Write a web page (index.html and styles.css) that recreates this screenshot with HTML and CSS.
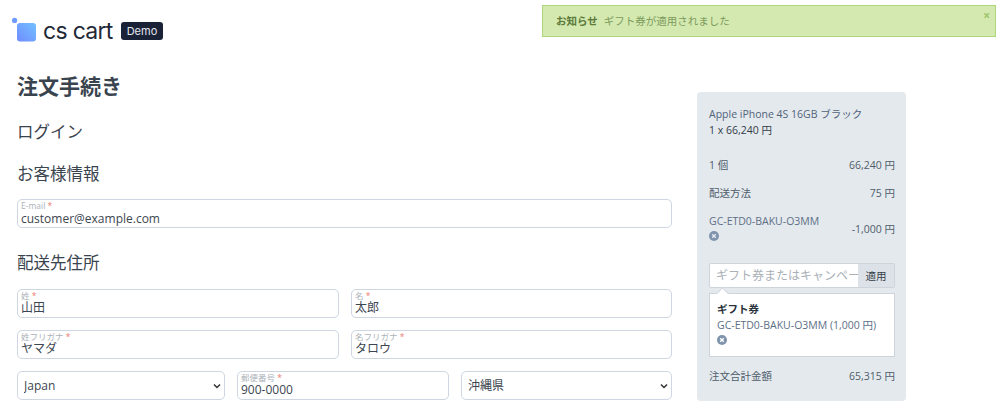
FILE: index.html
```html
<!doctype html>
<html>

<head>
	<meta charset="utf-8">
	<title>注文手続き</title>
	<link rel="stylesheet" href="styles.css">
</head>

<body>
	<div class="notice">
		<b>お知らせ</b><span>ギフト券が適用されました</span>
		<i class="notice-close">×</i>
	</div>

	<header class="logo">
		<svg class="logo-mark" width="26" height="26" viewBox="0 0 26 26">
			<defs>
				<linearGradient id="lg" x1="0" y1="1" x2="1" y2="0">
					<stop offset="0" stop-color="#6f8cff" />
					<stop offset="1" stop-color="#74c0ff" />
				</linearGradient>
			</defs>
			<rect x="5" y="6" width="19" height="18.5" rx="3" fill="url(#lg)" />
			<circle cx="2.6" cy="3.4" r="2.6" fill="#6f9bff" />
		</svg>
		<span class="logo-text">cs cart</span>
		<span class="logo-badge">Demo</span>
	</header>

	<div class="page">
		<main class="main">
			<h1>注文手続き</h1>
			<h2 class="h-login">ログイン</h2>
			<h2 class="h-customer">お客様情報</h2>
			<label class="field field-email">
				<span class="field-label">E-mail <em>*</em></span>
				<input type="text" value="customer@example.com">
			</label>
			<h2 class="h-address">配送先住所</h2>
			<div class="row">
				<label class="field">
					<span class="field-label">姓 <em>*</em></span>
					<input type="text" value="山田">
				</label>
				<label class="field">
					<span class="field-label">名 <em>*</em></span>
					<input type="text" value="太郎">
				</label>
			</div>
			<div class="row">
				<label class="field">
					<span class="field-label">姓フリガナ <em>*</em></span>
					<input type="text" value="ヤマダ">
				</label>
				<label class="field">
					<span class="field-label">名フリガナ <em>*</em></span>
					<input type="text" value="タロウ">
				</label>
			</div>
			<div class="row row-3">
				<select class="select">
					<option>Japan</option>
				</select>
				<label class="field">
					<span class="field-label">郵便番号 <em>*</em></span>
					<input type="text" value="900-0000">
				</label>
				<select class="select">
					<option>沖縄県</option>
				</select>
			</div>
		</main>

		<aside class="summary">
			<div class="product">
				<div class="product-name">Apple iPhone 4S 16GB ブラック</div>
				<div class="product-price">1 x 66,240 円</div>
			</div>
			<div class="line line-count"><span>1 個</span><span>66,240 円</span></div>
			<div class="line line-ship"><span>配送方法</span><span>75 円</span></div>
			<div class="line line-code">
				<span>GC-ETD0-BAKU-O3MM<br>
					<svg class="remove" width="10" height="10" viewBox="0 0 10 10">
						<circle cx="5" cy="5" r="5" fill="#7f93ad" />
						<path d="M3.2 3.2l3.6 3.6M6.8 3.2l-3.6 3.6" stroke="#e4e9ee" stroke-width="1.4" />
					</svg>
				</span>
				<span class="line-code-value">-1,000 円</span>
			</div>
			<div class="coupon">
				<input type="text" placeholder="ギフト券またはキャンペーンコード">
				<button type="button">適用</button>
			</div>
			<div class="gift">
				<b>ギフト券</b>
				<div class="gift-code">GC-ETD0-BAKU-O3MM (1,000 円)</div>
				<svg class="remove" width="10" height="10" viewBox="0 0 10 10">
					<circle cx="5" cy="5" r="5" fill="#7f93ad" />
					<path d="M3.2 3.2l3.6 3.6M6.8 3.2l-3.6 3.6" stroke="#fff" stroke-width="1.4" />
				</svg>
			</div>
			<div class="line line-total"><span>注文合計金額</span><span>65,315 円</span></div>
		</aside>
	</div>
</body>

</html>
```

FILE: styles.css
```css
* {
	box-sizing: border-box;
}

body {
	margin: 0;
	height: 411px;
	overflow: hidden;
	background: #fff;
	color: #3a444e;
	font-family: "Open Sans", "Noto Sans CJK JP", sans-serif;
	font-size: 10.5px;
}

.notice {
	position: absolute;
	top: 5px;
	left: 542px;
	width: 454px;
	height: 32px;
	padding-left: 13px;
	background: #d3e9b0;
	border: 1px solid #add77a;
	color: #7d9a5c;
	font-size: 10.5px;
	line-height: 30px;
}

.notice b {
	color: #5c7a3a;
	margin-right: 6px;
}

.notice-close {
	position: absolute;
	top: 2px;
	right: 5px;
	font-style: normal;
	font-weight: bold;
	font-size: 12px;
	line-height: 16px;
	color: #9cc56b;
}

.logo {
	display: flex;
	align-items: center;
	height: 26px;
	margin: 17px 0 0 12px;
}

.logo-text {
	margin: 1px 0 0 5px;
	font-family: Inter, sans-serif;
	font-size: 23px;
	letter-spacing: -0.7px;
	color: #1f2937;
}

.logo-badge {
	margin: 2px 0 0 8px;
	height: 18px;
	padding: 0 6px;
	border-radius: 3px;
	background: #1a2238;
	color: #e2e6ef;
	font-family: Inter, sans-serif;
	font-size: 11px;
	line-height: 18px;
}

.page {
	display: flex;
	align-items: flex-start;
	padding-left: 17px;
}

.main {
	width: 655px;
}

h1 {
	margin: 28px 0 0;
	font-size: 21px;
	line-height: 30px;
	font-weight: 700;
}

h2 {
	margin: 0;
	font-size: 16.5px;
	line-height: 24px;
	font-weight: 400;
}

.h-login {
	margin-top: 19px;
}

.h-customer {
	margin-top: 18px;
}

.h-address {
	margin-top: 23px;
}

.field {
	display: flex;
	flex-direction: column;
	height: 29px;
	padding: 2px 3px 0;
	background: #fff;
	border: 1px solid #cdd6e1;
	border-radius: 5px;
}

.field-email {
	margin-top: 13px;
}

.field-email input {
	margin-top: 1px;
}

.field-label {
	height: 8px;
	font-size: 8.5px;
	line-height: 8px;
	color: #adb3ba;
}

.field-label em {
	color: #ee7a70;
	font-style: normal;
}

.field input {
	border: 0;
	outline: 0;
	padding: 0;
	width: 100%;
	height: 15px;
	background: transparent;
	font-family: inherit;
	font-size: 12px;
	line-height: 15px;
	color: #3c4650;
}

.row {
	display: grid;
	grid-template-columns: 322px 321px;
	gap: 12px;
	margin-top: 12px;
}

.h-address+.row {
	margin-top: 14px;
}

.row-3 {
	grid-template-columns: 208px 212px 211px;
}

.select {
	appearance: none;
	height: 29px;
	padding: 0 0 0 6px;
	background: #fff url("data:image/svg+xml,%3Csvg xmlns='http://www.w3.org/2000/svg' width='8' height='6' viewBox='0 0 8 6'%3E%3Cpath d='M1 1.5l3 3 3-3' fill='none' stroke='%23333' stroke-width='1.5'/%3E%3C/svg%3E") no-repeat right 3px center;
	border: 1px solid #cdd6e1;
	border-radius: 5px;
	font-family: inherit;
	font-size: 12px;
	color: #3c4650;
}

.summary {
	width: 209px;
	height: 309px;
	margin: 49px 0 0 25px;
	padding: 14px 11px 0 12px;
	background: #e4e9ee;
	border-radius: 4px;
	color: #4f5d6b;
}

.product-name {
	line-height: 16px;
	color: #50637a;
}

.product-price {
	line-height: 16px;
	color: #333d47;
}

.line {
	display: flex;
	justify-content: space-between;
	align-items: center;
	line-height: 16px;
}

.line-count {
	margin-top: 19px;
}

.line-ship {
	margin-top: 12px;
}

.line-code {
	margin-top: 12px;
}

.line-code span:first-child {
	color: #5c6f85;
}

.line-code-value {
	padding-top: 3px;
}

.remove {
	display: block;
	margin-top: 2px;
}

.coupon {
	display: flex;
	height: 25px;
	margin-top: 22px;
	border: 1px solid #cdd4dc;
	border-radius: 2px;
	background: #fff;
}

.coupon input {
	flex: 1;
	min-width: 0;
	border: 0;
	outline: 0;
	padding: 0 0 0 6px;
	background: transparent;
	font-family: inherit;
	font-size: 12px;
}

.coupon input::placeholder {
	color: #a9b0b8;
}

.coupon button {
	width: 36px;
	padding: 0;
	border: 0;
	background: #dde2e8;
	font-family: inherit;
	font-size: 10.5px;
	color: #333d47;
}

.gift {
	position: relative;
	height: 64px;
	margin-top: 5px;
	padding: 7px 7px 0;
	background: #fff;
	border: 1px solid #cdd4dc;
	line-height: 16px;
}

.gift:before {
	content: "";
	position: absolute;
	top: -5px;
	left: 8px;
	width: 8px;
	height: 8px;
	background: #fff;
	border-top: 1px solid #cdd4dc;
	border-left: 1px solid #cdd4dc;
	transform: rotate(45deg);
}

.gift b {
	color: #2a333c;
}

.gift-code {
	color: #5c6f85;
}

.line-total {
	margin-top: 11px;
}
```
